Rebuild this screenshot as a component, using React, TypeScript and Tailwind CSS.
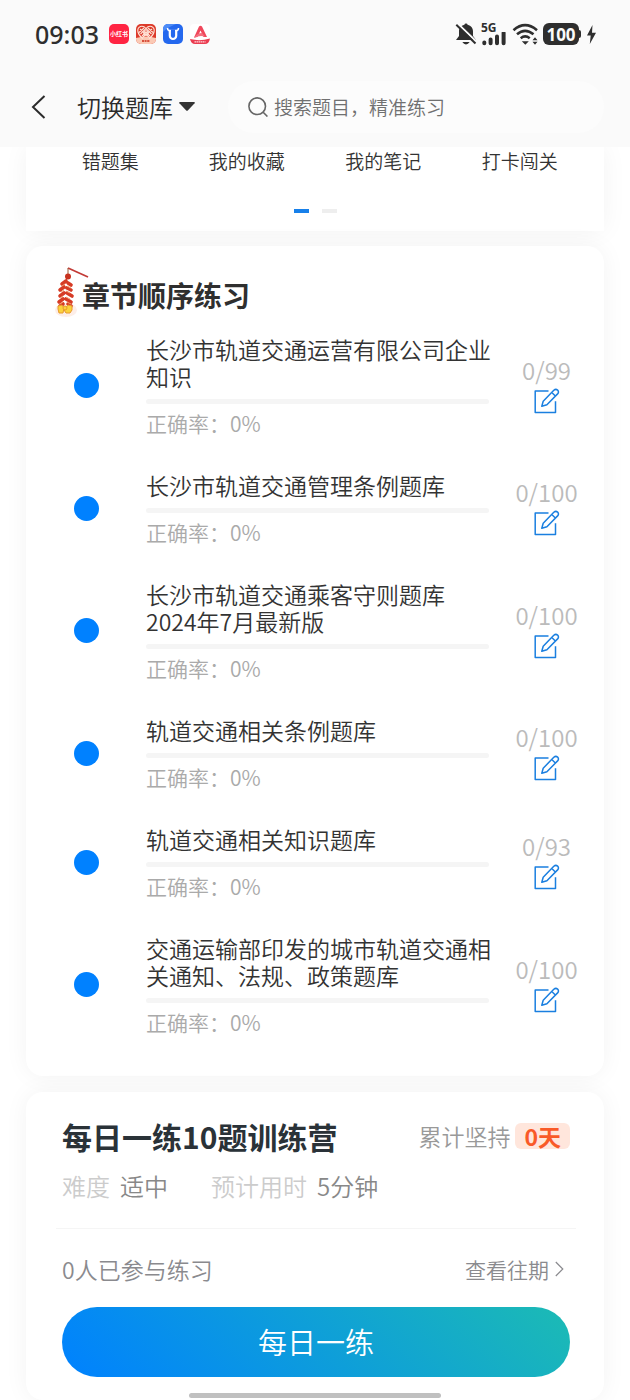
interface Chapter {
  title: string;
  done: number;
  total: number;
  rate: number;
}

const shortcuts = ['错题集', '我的收藏', '我的笔记', '打卡闯关'];

const chapters: Chapter[] = [
  { title: '长沙市轨道交通运营有限公司企业知识', done: 0, total: 99, rate: 0 },
  { title: '长沙市轨道交通管理条例题库', done: 0, total: 100, rate: 0 },
  { title: '长沙市轨道交通乘客守则题库\n2024年7月最新版', done: 0, total: 100, rate: 0 },
  { title: '轨道交通相关条例题库', done: 0, total: 100, rate: 0 },
  { title: '轨道交通相关知识题库', done: 0, total: 93, rate: 0 },
  { title: '交通运输部印发的城市轨道交通相关通知、法规、政策题库', done: 0, total: 100, rate: 0 },
];

/**
 * 系统状态栏
 */
function StatusBar() {
  return (
    <div className="flex h-[68px] items-center justify-between pr-[34px] pl-[35px] text-[#2e2e2e]">
      <div className="flex items-center">
        <span className="font-['Noto_Sans',sans-serif] text-[25px] leading-6 font-medium">09:03</span>
        {/* 通知应用图标 */}
        <div className="ml-2.5 flex items-center gap-[7px]">
          <div className="flex size-5 items-center justify-center rounded-[5px] bg-[#ff2442] text-[6px] leading-none font-bold whitespace-nowrap text-white">
            小红书
          </div>
          <svg className="size-5" viewBox="0 0 20 20">
            <rect width="20" height="20" rx="5" fill="#dc3a2a" />
            <path d="M0 14Q10 11 20 14v1a5 5 0 0 1-5 5H5a5 5 0 0 1-5-5z" fill="#fbc9b4" />
            <g fill="none" stroke="#ffe3d6" strokeWidth="1.1">
              <path d="M10 4.500Q7.500 1.500 4.500 2.500 1 4 2 8q1 4 5 6.500M10 4.500q2.500-3 5.500-2 3.500 1.500 2.500 5.500-1 4-5 6.500" />
              <path d="M4 5l9 8M16 5l-9 8M3 8.500L8 4M17 8.500L12 4M10 4.500L4.500 10M10 4.500l5.500 5.500M6 12l4-4 4 4" />
              <circle cx="10" cy="9" r="2.200" />
            </g>
            <path d="M6 17h8" stroke="#d8503c" strokeWidth="2" strokeDasharray="2 .6" />
          </svg>
          <svg className="size-5" viewBox="0 0 20 20">
            <rect width="20" height="20" rx="5" fill="#2468ee" />
            <path d="M0 8V5a5 5 0 0 1 5-5h8Q5 3 0 8" fill="#4c8bf7" />
            <path d="M4.500 4q0 2.600 2.500 2.600h6q2.500 0 2.500-2.600" fill="none" stroke="#fff" strokeWidth="1.500" />
            <path d="M6.800 6.600v5.200a3.200 3.200 0 0 0 6.400 0V6.600" fill="none" stroke="#fff" strokeWidth="2.200" />
            <path d="M8 5.500h4v3H8z" fill="#2468ee" />
          </svg>
          <svg className="size-5" viewBox="0 0 20 20">
            <rect width="20" height="20" rx="4" fill="#fff" />
            <path d="M4 13.500L9 2.500q1.500-1.500 3 0l5 10.500h-3.500L10.500 6.500 7.500 13z" fill="#f0475b" />
            <path d="M4 14q3-5 8-5l3 3.500q-6-1.500-11 1.500" fill="#f4707f" />
            <path d="M0 15q10 2.500 20-.5-1 5.500-5 5.500H5q-4 0-5-5" fill="#ea3c50" />
            <path d="M4.500 17.800h11" stroke="#ffd5da" strokeWidth="1.200" strokeDasharray="1.500 .5" />
          </svg>
        </div>
      </div>

      <div className="flex items-center">
        <svg className="size-[22px]" viewBox="0 0 22 22" fill="currentColor">
          <path d="M11 .500a1.600 1.600 0 0 1 1.600 1.300C16.300 2.600 18 5.500 18 8.500V13l3 4H1l3-4V8.500c0-3 1.700-5.900 5.400-6.700A1.600 1.600 0 0 1 11 .500M7.300 19h7.400q-1.600 2.400-3.700 2.400T7.300 19" />
          <path d="M2.800.8L22 19.200" stroke="#fafafa" strokeWidth="2" />
          <path d="M1.300 1.800L20.500 20.500" stroke="currentColor" strokeWidth="2" />
        </svg>
        <div className="ml-1 flex w-[26px] flex-col">
          <span className="font-['Noto_Sans',sans-serif] text-[12px] leading-[9px] font-bold">5G</span>
          <svg className="h-3.5 w-[26px]" viewBox="0 0 26 14" fill="none" stroke="currentColor" strokeWidth="4" strokeLinecap="round">
            <path d="M3.300 10.500v.7M9.600 7.500v3.700M16 4.500v6.700M22.600 1v10.200" />
          </svg>
        </div>
        <svg className="ml-[5px] h-6 w-[27px]" viewBox="0 0 27 24" fill="none" stroke="currentColor" strokeWidth="2.600">
          <path d="M1.500 8.200q11.500-10 23.500 0M5 12.300q8-7 16.500 0M8.700 16.200q4.500-3.600 9 0" />
          <path d="M9.800 19.200h7l-3.500 3.600zM20.500 18.200h5L23 15.200zM20.500 19.700h5l-2.500 3z" fill="currentColor" stroke="none" />
        </svg>
        <div className="ml-1 flex h-[22px] w-9 items-center justify-center rounded-[6px] bg-[#2e2e2e] font-['Noto_Sans',sans-serif] text-[17px] leading-none font-bold text-[#fafafa]">
          100
        </div>
        <span className="h-2 w-0.5 rounded-r bg-[#2e2e2e]" />
        <svg className="ml-1.5 h-[19px] w-[9px]" viewBox="0 0 9 19" fill="currentColor">
          <path d="M5.500 0L0 10.500h3.700L2.800 19 9 7.800H5z" />
        </svg>
      </div>
    </div>
  );
}

/**
 * 顶部导航：返回、切换题库、搜索
 */
function NavBar() {
  return (
    <div className="flex h-[79px] items-center pr-[26px] pb-0.5 pl-[26px]">
      <button type="button" aria-label="返回" className="flex h-10 w-[51px] items-center">
        <svg className="h-6 w-[26px]" viewBox="0 0 26 24" fill="none" stroke="#2b2b2b" strokeWidth="2">
          <path d="M18.500 1L7 12l11.500 11" />
        </svg>
      </button>
      <button type="button" className="flex items-center gap-1.5 text-[24px] leading-8 text-[#2b2b2b]">
        切换题库
        <svg className="h-[9px] w-4" viewBox="0 0 16 9" fill="#333">
          <path d="M1 0h14q1.500 0 .6 1.200L9 8.300q-1 1-2 0L.4 1.200Q-.5 0 1 0" />
        </svg>
      </button>
      <label className="ml-[33px] flex h-[52px] min-w-0 flex-1 items-center gap-1.5 rounded-full bg-[#fcfcfc] pl-5">
        <svg className="size-5 shrink-0" viewBox="0 0 20 20" fill="none" stroke="#666" strokeWidth="1.600">
          <circle cx="9.200" cy="9.200" r="8.300" />
          <path d="M15.200 15.200l4.200 4.300" />
        </svg>
        <input
          type="text"
          aria-label="搜索题目"
          placeholder="搜索题目，精准练习"
          className="min-w-0 flex-1 bg-transparent text-[19px] leading-7 outline-none placeholder:text-[#707070]"
        />
      </label>
    </div>
  );
}

// 鞭炮装饰
function Firecracker() {
  return (
    <svg className="h-[50px] w-10 shrink-0 overflow-visible" viewBox="-4 4 40 50">
      <ellipse cx="12" cy="44" rx="11" ry="7" fill="#fdeee8" />
      <path d="M14 2L34 11" stroke="#c23a36" strokeWidth="1.700" />
      <path d="M14 2v8l-2 5" stroke="#9c5a34" strokeWidth="1" fill="none" />
      <circle cx="14" cy="10.500" r="3" fill="#c8321f" />
      <g stroke="#d63b25" strokeWidth="3.600" strokeLinecap="round">
        <path d="M8 18l4-3M14 17l3 2M6 24l4-3M13 22l4 2M6 30l4-3M13 27l5 3M5 36l4-3M12 33l5 3M6 40l3-2M14 38l3 2" />
      </g>
      <g stroke="#f6a070" strokeWidth="1">
        <path d="M8 20l3-2M13 20l4 2M7 26l3-2M12 25l4 2M6 32l3-2M12 31l4 2M6 38l3-2M13 36l4 2" />
      </g>
      <g fill="#fbd23c" stroke="#e89a2c" strokeWidth="1">
        <path d="M4 40l4-1 2 3-1 5H5l-1-4zM14 39l4 1v4l-2 3h-4l-2-3z" />
        <circle cx="11" cy="42" r="2" />
      </g>
    </svg>
  );
}

function EditIcon() {
  return (
    <svg className="size-[26px]" viewBox="0 0 26 26" fill="none" stroke="#1a7fe0" strokeWidth="1.500" strokeLinejoin="round">
      <path d="M14.500 3H1.200v21.500h20.300V13.300" />
      <path d="M7.800 18.200l1.400-5L19.800 2.300q2-1.700 3.800-.2 1.700 1.800 0 3.800L12.900 16.700zM17.800 4.500l3.800 3.700" />
    </svg>
  );
}

/**
 * 章节列表项
 */
function ChapterRow({ title, done, total, rate }: Chapter) {
  return (
    <li className="flex items-center">
      <div className="flex w-[120px] shrink-0 justify-center">
        <span className="size-[25px] rounded-full bg-[#0081ff]" />
      </div>
      <div className="min-w-0 flex-1">
        <h3 className="-mr-1 text-[23px] leading-[27px] whitespace-pre-line text-[#333]">{title}</h3>
        <div className="mt-[9px] h-[5px] overflow-hidden rounded-full bg-[#f5f5f5]">
          <div className="h-full bg-[#0081ff]" style={{ width: `${rate}%` }} />
        </div>
        <p className="mt-2 text-[21px] leading-[23px] text-[#aaa]">正确率：{rate}%</p>
      </div>
      <div className="flex w-[115px] shrink-0 flex-col items-center text-[#bbb]">
        <span className="text-[24px] leading-[30px]">{done}/{total}</span>
        <button type="button" aria-label="开始练习" className="flex h-8 items-center">
          <EditIcon />
        </button>
      </div>
    </li>
  );
}

function DailyCard() {
  return (
    <section className="mt-4 rounded-[17px] bg-white pt-7 pr-[34px] pb-[23px] pl-9 shadow-[0_0_24px_rgba(0,0,0,0.05)]">
      <div className="flex items-center justify-between">
        <h2 className="text-[30px] leading-8 font-bold text-[#2a3238]">每日一练10题训练营</h2>
        <div className="flex items-center gap-[5px] text-[23px] leading-[26px] text-[#999]">
          累计坚持
          <span className="rounded-[6px] bg-[#ffe6dc] px-[9px] font-bold text-[#f95a28]">0天</span>
        </div>
      </div>
      <div className="mt-[18px] flex gap-[43px] text-[24px] leading-8 text-[#888]">
        <p><span className="mr-2.5 text-[#ccc]">难度</span>适中</p>
        <p><span className="mr-2.5 text-[#ccc]">预计用时</span>5分钟</p>
      </div>
      <hr className="-mx-1.5 mt-[26px] border-[#f5f5f5]" />
      <div className="mt-6 flex items-center justify-between leading-8 text-[#8a8a8e]">
        <span className="text-[23px]">0人已参与练习</span>
        <a href="#history" className="flex items-center gap-1.5 pr-1.5 text-[21px]">
          查看往期
          <svg className="h-4 w-[9px]" viewBox="0 0 9 16" fill="none" stroke="#8a8a8e" strokeWidth="1.200">
            <path d="M.8 1l7 7-7 7" />
          </svg>
        </a>
      </div>
      <button
        type="button"
        className="mt-[22px] block h-[70px] w-full rounded-full bg-[linear-gradient(45deg,#0081ff,#1cbbb4)] text-[29px] text-white"
      >
        每日一练
      </button>
    </section>
  );
}

export default function App() {
  return (
    <div className="relative min-h-screen overflow-hidden bg-white font-['Noto_Sans_CJK_SC',sans-serif] font-[350]">
      <header className="sticky top-0 z-10 bg-[#fafafa]">
        <StatusBar />
        <NavBar />
      </header>

      <main className="px-[26px]">
        {/* 快捷入口 */}
        <nav className="bg-white px-4 pb-[18px] shadow-[0_0_24px_rgba(0,0,0,0.05)]">
          <div className="grid grid-cols-4 text-center text-[19px] leading-7 text-[#333]">
            {shortcuts.map((name) => (
              <a key={name} href="#shortcut">{name}</a>
            ))}
          </div>
          <div className="mt-[34px] flex justify-center gap-[13px]">
            <span className="h-1 w-[15px] bg-[#1780ea]" />
            <span className="h-1 w-[15px] bg-[#eee]" />
          </div>
        </nav>

        {/* 章节练习 */}
        <section className="mt-[15px] rounded-[17px] bg-white pt-[19px] pb-[42px] shadow-[0_0_24px_rgba(0,0,0,0.05)]">
          <div className="flex h-[60px] items-center pl-6">
            <Firecracker />
            <h2 className="-ml-2 text-[28px] leading-9 font-bold text-[#2f2f2f]">章节顺序练习</h2>
          </div>
          <ul className="mt-[11px] flex flex-col gap-[37px]">
            {chapters.map((chapter) => (
              <ChapterRow key={chapter.title} {...chapter} />
            ))}
          </ul>
        </section>

        <DailyCard />
      </main>

      {/* 底部手势条 */}
      <div className="absolute bottom-0.5 left-1/2 h-[5px] w-2/5 -translate-x-1/2 rounded-full bg-[#c0c0c0]" />
    </div>
  );
}
